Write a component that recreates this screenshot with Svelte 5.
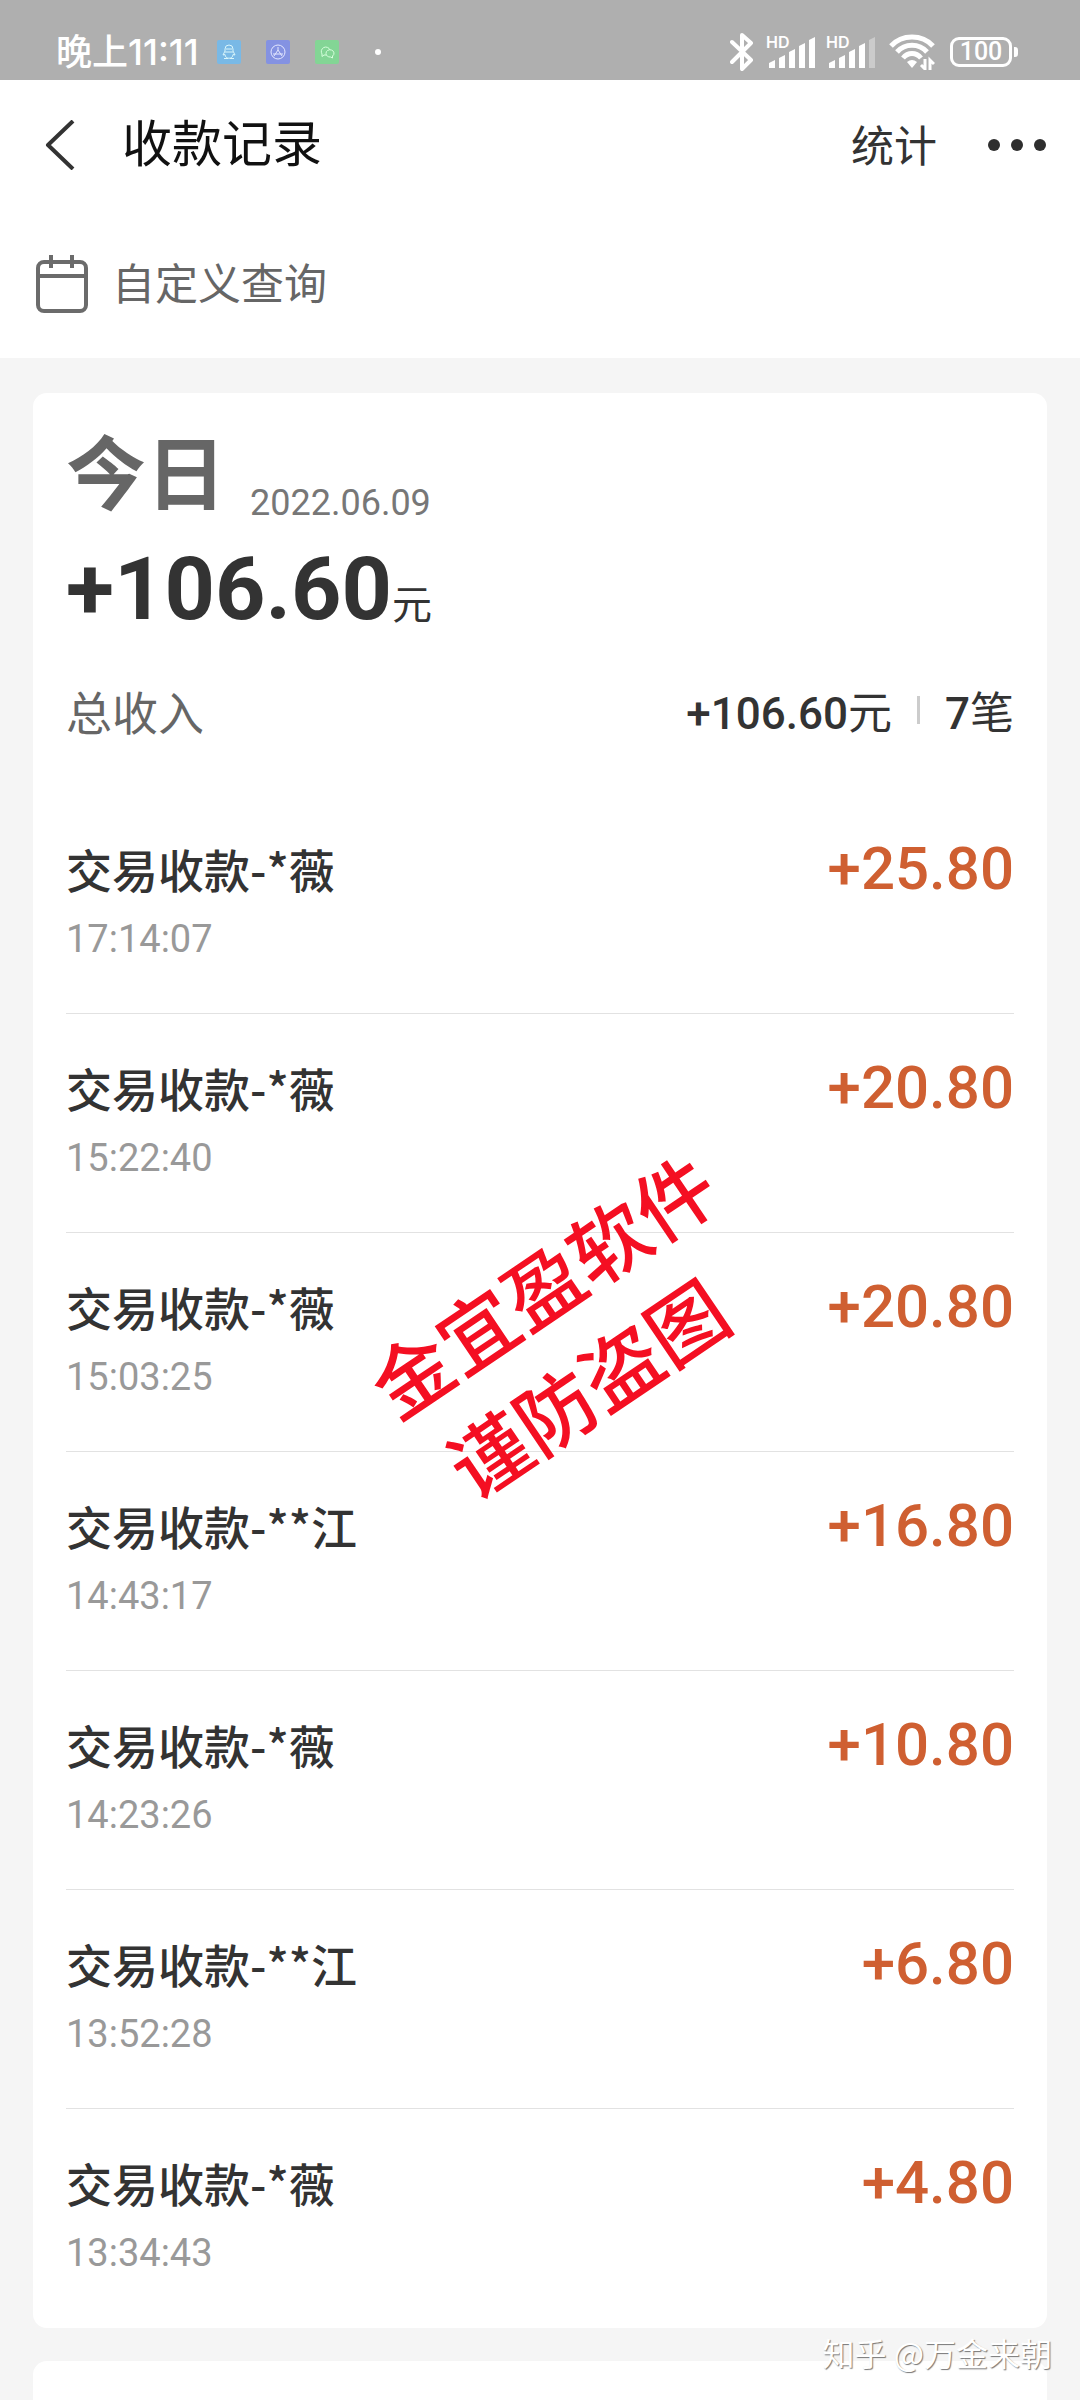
<script>
  const records = [
    { payer: '*薇', time: '17:14:07', amount: '25.80' },
    { payer: '*薇', time: '15:22:40', amount: '20.80' },
    { payer: '*薇', time: '15:03:25', amount: '20.80' },
    { payer: '**江', time: '14:43:17', amount: '16.80' },
    { payer: '*薇', time: '14:23:26', amount: '10.80' },
    { payer: '**江', time: '13:52:28', amount: '6.80' },
    { payer: '*薇', time: '13:34:43', amount: '4.80' },
  ];

  const total = records.reduce((sum, r) => sum + Number(r.amount), 0).toFixed(2);

  // how many of the five bars are lit for each SIM
  const sims = [5, 4];
</script>

<div class="page">
  <div class="status">
    <div class="status-left">
      <span class="clock">晚上11:11</span>
      <div class="apps">
        <svg class="app" viewBox="0 0 24 24" aria-hidden="true">
          <rect width="24" height="24" rx="2" fill="#79b9e6" />
          <g fill="none" stroke="#d9f6fb" stroke-width="1">
            <path d="M8 11V9a4 4 0 0 1 8 0v2" />
            <path d="M8 11l-2 4 2-.5M16 11l2 4-2-.5M8 12h8M9 9h6" />
            <path d="M8 14.500c0 5 8 5 8 0M7 18.500h4M13 18.500h4" />
          </g>
        </svg>
        <svg class="app" viewBox="0 0 24 24" aria-hidden="true">
          <rect width="24" height="24" rx="2" fill="#8492e2" />
          <g fill="none" stroke="#e4e8ff" stroke-width="1">
            <circle cx="12" cy="12" r="7" />
            <path d="M12 7v3l-4 6M12 10l4 6M7 14h10" />
          </g>
        </svg>
        <svg class="app" viewBox="0 0 24 24" aria-hidden="true">
          <rect width="24" height="24" rx="2" fill="#83d595" />
          <g fill="none" stroke="#d6ffdc" stroke-width="1">
            <path d="M11 15l-2 0-2 1.500V14a4.500 4.500 0 1 1 8-4" />
            <path d="M11 13.500a4 3.500 0 1 1 6.500 2.500v2l-2-1a4 3.500 0 0 1-4.500-3.500z" />
          </g>
        </svg>
      </div>
      <span class="more-dot"></span>
    </div>

    <div class="status-right">
      <svg class="bluetooth" viewBox="0 0 24 40" aria-hidden="true">
        <path d="M2 10l19 18-9 9V3l9 8L2 30" fill="none" stroke="#fff" stroke-width="4" stroke-linejoin="round" stroke-linecap="round" />
      </svg>
      {#each sims as lit}
        <svg class="signal" viewBox="0 0 54 40" aria-hidden="true">
          <text x="0" y="16" class="hd">HD</text>
          {#each [8, 13, 19, 25, 31] as h, i}
            <path
              d="M{3 + i * 10} {36 - h + 3}l6-3v{h}h-6z"
              fill="#fff"
              opacity={i < lit ? 1 : 0.35}
            />
          {/each}
        </svg>
      {/each}
      <svg class="wifi" viewBox="0 0 46 36" aria-hidden="true">
        <g fill="none" stroke="#fff" stroke-width="5">
          <path d="M2 12C13 0 33 0 44 12" />
          <path d="M8 18C16 9 30 9 38 18" />
          <path d="M14 24C19 18 27 18 32 24" />
        </g>
        <path d="M18 28q5-4 10 0l-5 6z" fill="#fff" />
        <path d="M36 25v10l-4-4M41 36V26l4 4" fill="none" stroke="#fff" stroke-width="3" />
      </svg>
      <div class="battery">
        <span class="level">100</span>
        <span class="nub"></span>
      </div>
    </div>
  </div>

  <header class="bar">
    <button type="button" class="back" aria-label="返回">
      <svg viewBox="0 0 30 50" aria-hidden="true">
        <path d="M28 1L3 25l25 24" fill="none" stroke="#333" stroke-width="4" stroke-linejoin="round" />
      </svg>
    </button>
    <h1>收款记录</h1>
    <button type="button" class="stats">统计</button>
    <button type="button" class="more" aria-label="更多">
      <svg viewBox="0 0 58 12" aria-hidden="true">
        <g fill="#2e2e2e">
          <circle cx="6" cy="6" r="6" />
          <circle cx="29" cy="6" r="6" />
          <circle cx="52" cy="6" r="6" />
        </g>
      </svg>
    </button>
  </header>

  <button type="button" class="query">
    <svg viewBox="0 0 52 58" aria-hidden="true">
      <g fill="none" stroke="#6b6b6b" stroke-width="4">
        <rect x="2" y="7" width="48" height="49" rx="6" />
        <path d="M2 21h48M15 0v13M36 0v13" />
      </g>
    </svg>
    <span>自定义查询</span>
  </button>

  <main>
    <section class="card">
      <div class="today">
        <h2>今日</h2>
        <span class="date">2022.06.09</span>
      </div>
      <div class="total">
        <span class="total-num">+{total}</span><span class="unit">元</span>
      </div>
      <div class="summary">
        <span class="s-label">总收入</span>
        <span class="s-value"><b>+{total}</b>元</span>
        <span class="s-sep"></span>
        <span class="s-value"><b>{records.length}</b>笔</span>
      </div>

      <ul class="list">
        {#each records as r}
          <li>
            <div class="info">
              <span class="name">交易收款-{r.payer}</span>
              <span class="time">{r.time}</span>
            </div>
            <span class="amount">+{r.amount}</span>
          </li>
        {/each}
      </ul>
    </section>

    <section class="card next"></section>
  </main>

  <div class="stamp" aria-hidden="true">
    <span>金宜盈软件</span>
    <span class="stamp-second">谨防盗图</span>
  </div>
  <span class="credit">知乎 @万金来朝</span>
</div>

<style>
  :global(body) {
    margin: 0;
    background: #f5f5f5;
    color: #333;
    font-family: 'Noto Sans CJK SC', sans-serif;
  }

  .page {
    position: relative;
    min-height: 100vh;
    display: flex;
    flex-direction: column;
    overflow: hidden;
  }

  button {
    border: 0;
    padding: 0;
    background: none;
    font: inherit;
    color: inherit;
    cursor: pointer;
  }
  svg { display: block; }

  .status {
    height: 80px;
    padding: 22px 62px 0 56px;
    box-sizing: border-box;
    background: #afafaf;
    color: #fff;
    display: flex;
    justify-content: space-between;
  }
  .status-left, .status-right {
    height: 60px;
    display: flex;
    align-items: center;
  }
  .clock {
    font-family: Inter, 'Noto Sans CJK SC', sans-serif;
    font-size: 36px;
    font-weight: 500;
    line-height: 60px;
  }
  .apps {
    display: flex;
    gap: 25px;
    margin-left: 18px;
  }
  .app { width: 24px; height: 24px; }
  .more-dot {
    width: 6px;
    height: 6px;
    border-radius: 50%;
    background: #fff;
    margin-left: 36px;
  }
  .bluetooth { width: 24px; height: 40px; margin-right: 12px; }
  .signal { width: 54px; height: 40px; margin-right: 6px; }
  .hd {
    font-family: Inter, sans-serif;
    font-size: 16px;
    font-weight: 600;
    fill: #fff;
  }
  .wifi { width: 46px; height: 36px; margin: 0 15px 0 3px; }
  .battery { display: flex; align-items: center; gap: 2px; }
  .level {
    width: 56px;
    height: 24px;
    border: 3px solid #fff;
    border-radius: 9px;
    font-family: Roboto, sans-serif;
    font-size: 25px;
    font-weight: 500;
    line-height: 24px;
    text-align: center;
  }
  .nub {
    width: 4px;
    height: 10px;
    border-radius: 0 3px 3px 0;
    background: #fff;
  }

  .bar {
    height: 130px;
    padding: 0 34px 0 45px;
    background: #fff;
    display: flex;
    align-items: center;
  }
  .back svg { width: 30px; height: 50px; }
  h1 {
    flex: 1;
    margin: 0 0 10px 47px;
    font-size: 50px;
    font-weight: 400;
    line-height: 60px;
    color: #111;
  }
  .stats {
    font-size: 43px;
    line-height: 60px;
    margin: 0 51px 4px 0;
  }
  .more svg { width: 58px; height: 12px; }

  .query {
    height: 148px;
    padding: 0 36px;
    background: #fff;
    color: #666;
    font-size: 43px;
    display: flex;
    align-items: center;
    gap: 24px;
  }
  .query svg { width: 52px; height: 58px; }
  .query span { margin-bottom: 6px; }

  main {
    flex: 1;
    display: flex;
    flex-direction: column;
    gap: 33px;
    padding: 35px 33px 0;
  }
  .card {
    background: #fff;
    border-radius: 14px;
    padding: 22px 33px 0;
  }
  .next {
    flex: 1;
    padding: 0;
    border-radius: 14px 14px 0 0;
  }

  .today {
    height: 112px;
    margin-bottom: 2px;
    display: flex;
    align-items: flex-end;
    gap: 24px;
  }
  h2 {
    margin: 0;
    font-size: 80px;
    font-weight: 700;
    line-height: 118px;
    color: #666;
  }
  .date {
    font-family: Roboto, sans-serif;
    font-size: 36px;
    line-height: 48px;
    color: #777;
  }
  .total {
    height: 120px;
    display: flex;
    align-items: baseline;
    line-height: 120px;
  }
  .total-num {
    font-family: Roboto, sans-serif;
    font-size: 88px;
    font-weight: 700;
  }
  .unit { font-size: 40px; }
  .summary {
    height: 122px;
    margin-bottom: 24px;
    display: flex;
    align-items: center;
    font-size: 44px;
  }
  .s-label { flex: 1; font-size: 46px; color: #666; }
  .s-value b {
    font-family: Roboto, sans-serif;
    font-weight: 500;
  }
  .s-sep {
    width: 3px;
    height: 28px;
    margin: 0 25px;
    background: #ccc;
  }

  .list {
    list-style: none;
    margin: 0;
    padding: 0;
  }
  li {
    display: flex;
    justify-content: space-between;
    align-items: flex-start;
    padding: 40px 0 36px;
    border-bottom: 1px solid #e2e2e2;
  }
  li:last-child { border-bottom-color: transparent; }
  .info { display: flex; flex-direction: column; }
  .name {
    font-size: 46px;
    font-weight: 500;
    line-height: 66px;
  }
  .time {
    font-family: Roboto, sans-serif;
    font-size: 38px;
    line-height: 76px;
    color: #999;
  }
  .amount {
    font-family: Roboto, sans-serif;
    font-size: 60px;
    font-weight: 500;
    line-height: 68px;
    color: #cf5f31;
  }

  .stamp {
    position: absolute;
    top: 1329px;
    left: 53%;
    display: flex;
    flex-direction: column;
    align-items: center;
    transform: translate(-50%, -50%) rotate(-34deg);
    color: #f40f22;
    font-size: 79px;
    font-weight: 500;
    line-height: 110px;
    white-space: nowrap;
    pointer-events: none;
  }
  .stamp-second { padding-right: 40px; }
  .credit {
    position: absolute;
    right: 28px;
    bottom: 24px;
    color: #fff;
    font-size: 32px;
    line-height: 48px;
    text-shadow: 1px 1px 1px #777;
  }
</style>
